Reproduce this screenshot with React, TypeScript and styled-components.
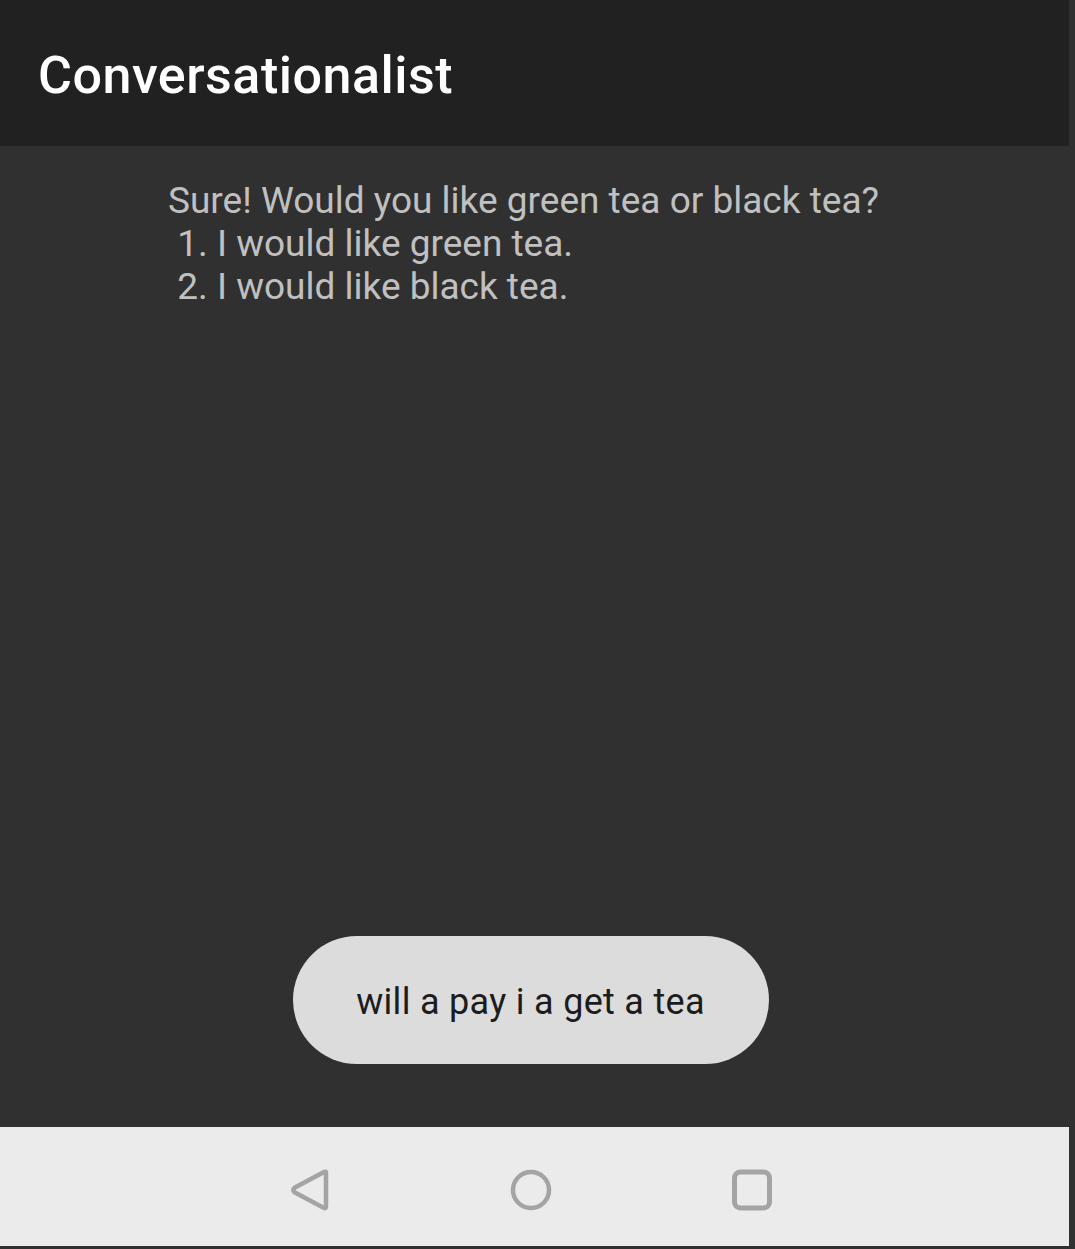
import styled, { createGlobalStyle } from "styled-components";

const GlobalStyle = createGlobalStyle`
  html, body {
    margin: 0;
    padding: 0;
    background: #303030;
  }
  body {
    font-family: Roboto, "Noto Sans", sans-serif;
  }
`;

const Screen = styled.div`
  display: flex;
  flex-direction: column;
  width: 1069px;
  height: 1246px;
  background: #303030;
`;

const Header = styled.header`
  height: 146px;
  display: flex;
  align-items: center;
  padding: 4px 0 0 38px;
  box-sizing: border-box;
  background: #212121;
  flex-shrink: 0;
`;

const Title = styled.h1`
  margin: 0;
  color: #ffffff;
  font-size: 52px;
  font-weight: 500;
  letter-spacing: 0.5px;
`;

const Main = styled.main`
  flex: 1;
  display: flex;
  flex-direction: column;
  align-items: center;
  padding: 33px 8px 63px 0;
`;

const Reply = styled.div`
  align-self: flex-start;
  margin-left: 168px;
  color: #c0c0c0;
  font-size: 37px;
  line-height: 43px;
  white-space: pre;
`;

const Spacer = styled.div`
  flex: 1;
`;

const Bubble = styled.div`
  width: 476px;
  height: 128px;
  border-radius: 64px;
  background: #dcdcdc;
  color: #1c1c1c;
  display: flex;
  align-items: center;
  justify-content: center;
  font-size: 36px;
  letter-spacing: 0.3px;
  padding-top: 4px;
  box-sizing: border-box;
`;

const NavBar = styled.nav`
  height: 119px;
  flex-shrink: 0;
  box-sizing: border-box;
  padding: 6px 8px 0 0;
  background: #ebebeb;
  display: flex;
  align-items: center;
  justify-content: center;
  gap: 177px;
`;

const NavIcon = styled.svg`
  width: 44px;
  height: 44px;
  display: block;
`;

const reply = `Sure! Would you like green tea or black tea?
 1. I would like green tea.
 2. I would like black tea.`;

export default function App() {
  return (
    <>
      <GlobalStyle />
      <Screen>
        <Header>
          <Title>Conversationalist</Title>
        </Header>
        <Main>
          <Reply>{reply}</Reply>
          <Spacer />
          <Bubble>will a pay i a get a tea</Bubble>
        </Main>
        <NavBar>
          <NavIcon viewBox="0 0 44 44">
            <path
              d="M38 4.5 L38 38.5 Q38 41 35.5 39.8 L6.5 24.2 Q4.3 22 6.5 19.8 L35.5 4.2 Q38 3 38 4.5 Z"
              fill="none"
              stroke="#a4a4a4"
              strokeWidth="4.5"
              strokeLinejoin="round"
            />
          </NavIcon>
          <NavIcon viewBox="0 0 44 44">
            <circle cx="22" cy="22" r="18" fill="none" stroke="#a4a4a4" strokeWidth="4.5" />
          </NavIcon>
          <NavIcon viewBox="0 0 44 44">
            <rect x="4.5" y="4" width="35" height="36" rx="6" fill="none" stroke="#a4a4a4" strokeWidth="5" />
          </NavIcon>
        </NavBar>
      </Screen>
    </>
  );
}
